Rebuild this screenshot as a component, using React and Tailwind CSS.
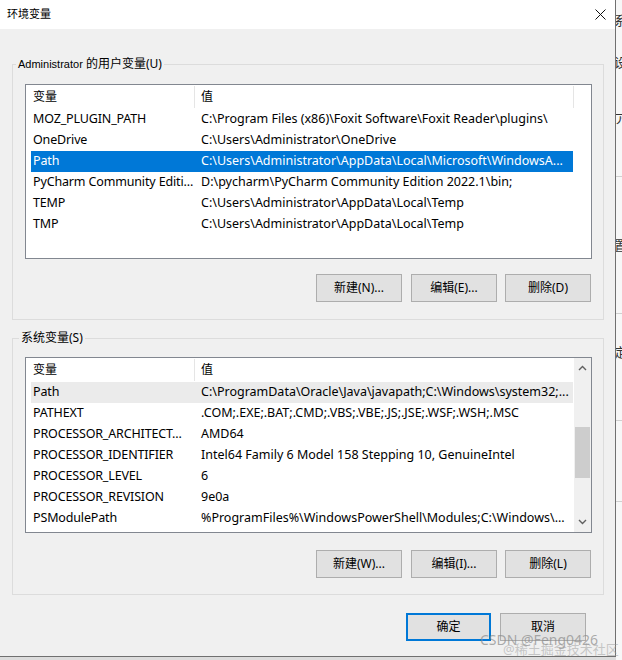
import React from "react";

const userVars = [
  ["MOZ_PLUGIN_PATH", "C:\\Program Files (x86)\\Foxit Software\\Foxit Reader\\plugins\\"],
  ["OneDrive", "C:\\Users\\Administrator\\OneDrive"],
  ["Path", "C:\\Users\\Administrator\\AppData\\Local\\Microsoft\\WindowsA..."],
  ["PyCharm Community Editi...", "D:\\pycharm\\PyCharm Community Edition 2022.1\\bin;"],
  ["TEMP", "C:\\Users\\Administrator\\AppData\\Local\\Temp"],
  ["TMP", "C:\\Users\\Administrator\\AppData\\Local\\Temp"],
];

const sysVars = [
  ["Path", "C:\\ProgramData\\Oracle\\Java\\javapath;C:\\Windows\\system32;..."],
  ["PATHEXT", ".COM;.EXE;.BAT;.CMD;.VBS;.VBE;.JS;.JSE;.WSF;.WSH;.MSC"],
  ["PROCESSOR_ARCHITECT...", "AMD64"],
  ["PROCESSOR_IDENTIFIER", "Intel64 Family 6 Model 158 Stepping 10, GenuineIntel"],
  ["PROCESSOR_LEVEL", "6"],
  ["PROCESSOR_REVISION", "9e0a"],
  ["PSModulePath", "%ProgramFiles%\\WindowsPowerShell\\Modules;C:\\Windows\\..."],
];

function Header({ extraDivider }) {
  return (
    <div className="flex h-[24px] items-stretch bg-white">
      <div className="ml-[5px] flex w-[163px] items-center pl-[2px]">变量</div>
      <div className="my-[1px] w-px bg-[#e5e5e5]" />
      <div className="flex w-[378px] items-center pl-[6px]">值</div>
      {extraDivider && <div className="my-[1px] w-px bg-[#e5e5e5]" />}
    </div>
  );
}

function Row({ name, value, state }) {
  const bg =
    state === "selected"
      ? "bg-[#0078d7] text-white"
      : state === "hover"
      ? "bg-[#ebebeb]"
      : "";
  return (
    <div className={`ml-[5px] flex h-[21px] w-[542px] items-center whitespace-nowrap text-[12.5px] ${bg}`}>
      <div className="w-[163px] overflow-hidden pl-[2px] tracking-[-0.15px]">{name}</div>
      <div className="flex-1 overflow-hidden pl-[7px]">{value}</div>
    </div>
  );
}

function Btn({ children, className = "" }) {
  return (
    <div
      className={`flex h-[28px] w-[86px] items-center justify-center border border-[#adadad] bg-[#e1e1e1] ${className}`}
    >
      {children}
    </div>
  );
}

function Chevron({ up }) {
  return (
    <svg width="9" height="6" viewBox="0 0 9 6">
      <path
        d={up ? "M1 5 L4.5 1.5 L8 5" : "M1 1 L4.5 4.5 L8 1"}
        fill="none"
        stroke="#606060"
        strokeWidth="1.4"
      />
    </svg>
  );
}

export default function App() {
  return (
    <div className="flex h-[660px] w-[622px] overflow-hidden bg-[#dcdcdc] font-['Noto_Sans','Noto_Sans_CJK_SC',sans-serif] text-[12px] text-black">
      <div className="relative flex h-[657px] w-[616px] shrink-0 flex-col border-r border-b border-[#707070] bg-[#f0f0f0]">
        {/* title bar */}
        <div className="flex h-[29px] items-center justify-between bg-white pl-[7px] pr-[9px]">
          <span className="text-[11px]">环境变量</span>
          <svg width="11" height="11" viewBox="0 0 11 11">
            <path d="M0.5 0.5 L10.5 10.5 M10.5 0.5 L0.5 10.5" stroke="#111" strokeWidth="1" />
          </svg>
        </div>

        <div className="flex w-[604px] flex-col pl-[12px]">
          {/* user variables */}
          <fieldset className="mt-[27px] border border-[#dcdcdc] pb-[17px]">
            <legend className="ml-[3px] px-[2px] leading-[16px]">
              <span className="font-['Liberation_Sans','Noto_Sans_CJK_SC',sans-serif] text-[11px]">Administrator</span>{" "}
              的用户变量(U)
            </legend>
            <div className="ml-[12px] mt-[12px] h-[175px] w-[567px] border border-[#828790] bg-white">
              <Header extraDivider />
              <Row name={userVars[0][0]} value={userVars[0][1]} />
              <Row name={userVars[1][0]} value={userVars[1][1]} />
              <Row name={userVars[2][0]} value={userVars[2][1]} state="selected" />
              <Row name={userVars[3][0]} value={userVars[3][1]} />
              <Row name={userVars[4][0]} value={userVars[4][1]} />
              <Row name={userVars[5][0]} value={userVars[5][1]} />
            </div>
            <div className="mt-[15px] flex justify-end pr-[12px]">
              <Btn>新建(N)...</Btn>
              <Btn className="ml-[9px]">编辑(E)...</Btn>
              <Btn className="ml-[8px]">删除(D)</Btn>
            </div>
          </fieldset>

          {/* system variables */}
          <fieldset className="mt-[10px] border border-[#dcdcdc] pb-[16px]">
            <legend className="ml-[6px] px-[2px] leading-[16px]">系统变量(S)</legend>
            <div className="ml-[12px] mt-[11px] flex h-[176px] w-[567px] border border-[#828790] bg-white">
              <div className="w-[548px] overflow-hidden">
                <Header />
                {sysVars.map(([n, v], i) => (
                  <Row key={n} name={n} value={v} state={i === 0 ? "hover" : ""} />
                ))}
              </div>
              <div className="flex flex-1 flex-col items-center bg-[#f0f0f0]">
                <div className="flex h-[17px] items-center justify-center pt-[3px]">
                  <Chevron up />
                </div>
                <div className="mt-[52px] h-[51px] w-[15px] bg-[#cdcdcd]" />
                <div className="flex-1" />
                <div className="flex h-[17px] items-center justify-center pb-[3px]">
                  <Chevron />
                </div>
              </div>
            </div>
            <div className="mt-[17px] flex justify-end pr-[12px]">
              <Btn>新建(W)...</Btn>
              <Btn className="ml-[9px]">编辑(I)...</Btn>
              <Btn className="ml-[8px]">删除(L)</Btn>
            </div>
          </fieldset>

          {/* ok / cancel */}
          <div className="mt-[18px] flex justify-end pr-[18px]">
            <div className="flex h-[28px] w-[85px] items-center justify-center border-2 border-[#0078d7] bg-[#e1e1e1]">
              确定
            </div>
            <Btn className="ml-[9px]">取消</Btn>
          </div>
        </div>

        {/* watermark */}
        <div className="pointer-events-none absolute left-[480px] top-[632px] whitespace-nowrap text-[14px] leading-[16px] text-[#8a8a8a]/70">
          CSDN @Feng0426
        </div>
        <div className="pointer-events-none absolute left-[503px] top-[641px] whitespace-nowrap text-[13px] leading-[16px] text-[#9a9a9a]/50">
          @稀土掘金技术社区
        </div>
      </div>

      {/* window behind */}
      <div className="flex w-[6px] flex-col overflow-hidden bg-[#f7f7f7] text-[13px] leading-[16px] text-[#333]">
        <span className="mt-[12px] -ml-[2px]">系</span>
        <span className="mt-[26px] -ml-[2px]">设</span>
        <span className="mt-[40px] -ml-[2px]">ア</span>
        <div className="mt-[50px] h-px w-full bg-[#d0d0d0]" />
        <span className="mt-[60px] -ml-[2px]">置</span>
        <div className="mt-[60px] h-px w-full bg-[#d0d0d0]" />
        <span className="mt-[30px] -ml-[2px]">定</span>
        <div className="mt-[60px] h-px w-full bg-[#d0d0d0]" />
        <div className="mt-[80px] h-px w-full bg-[#d0d0d0]" />
      </div>
    </div>
  );
}
